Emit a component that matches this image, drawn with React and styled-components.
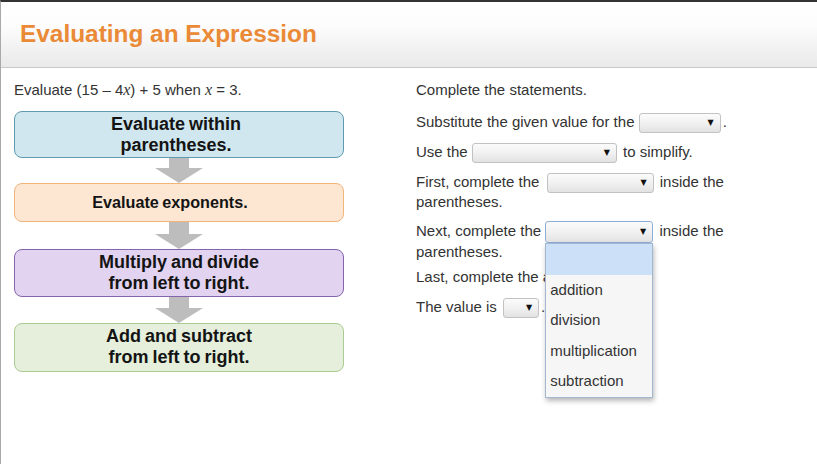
import React from "react";
import styled, { createGlobalStyle } from "styled-components";

const GlobalStyle = createGlobalStyle`
  html, body { margin: 0; padding: 0; background: #fff; }
  body { font-family: "Liberation Sans", Arial, sans-serif; }
  * { box-sizing: border-box; }
`;

const Frame = styled.div`
  width: 817px;
  height: 464px;
  border-top: 2px solid #333;
  border-left: 1px solid #a9a9a9;
  overflow: hidden;
  background: #fff;
`;

const Header = styled.header`
  height: 66px;
  display: flex;
  align-items: center;
  padding: 0 0 2px 19px;
  background: linear-gradient(to bottom, #ffffff 0%, #fdfdfd 35%, #e9e9e9 100%);
  border-bottom: 1px solid #c9c9c9;
`;

const Title = styled.h1`
  margin: 0;
  font-size: 24.4px;
  line-height: 28px;
  font-weight: bold;
  color: #ea8a36;
`;

const Body = styled.main`
  display: flex;
  padding: 13px 0 0 13px;
  font-size: 15px;
  line-height: 18px;
  color: #333;
`;

const LeftCol = styled.section`
  width: 330px;
  flex: none;
`;

const RightCol = styled.section`
  width: 322px;
  margin-left: 72px;
  flex: none;
`;

const Prompt = styled.p`
  margin: 0 0 ${(p) => p.$gap || 0}px;
`;

const Var = styled.i`
  font-family: "Liberation Serif", "Times New Roman", serif;
  font-size: 16px;
`;

const Flow = styled.div`
  display: flex;
  flex-direction: column;
`;

const Step = styled.div`
  border: 1px solid ${(p) => p.$border};
  background: ${(p) => p.$fill};
  border-radius: 8px;
  text-align: center;
  font-weight: bold;
  color: #141414;
  font-size: ${(p) => p.$size || 18}px;
  line-height: 21px;
  word-spacing: -1px;
  padding: ${(p) => p.$pad || "2px 0 2px"};
`;

const ArrowRow = styled.div`
  display: flex;
  justify-content: center;
  height: ${(p) => p.$h || 26}px;
`;

const Arrow = ({ h }) => (
  <ArrowRow $h={h}>
    <svg width="50" height={h} viewBox={`0 0 50 ${h}`}>
      <rect x="15" y="0" width="20" height={h - 15} fill="#bdbdbd" />
      <polygon points={`1,${h - 15} 49,${h - 15} 25,${h}`} fill="#bdbdbd" />
    </svg>
  </ArrowRow>
);

const Statement = styled.p`
  margin: 0 0 ${(p) => (p.$gap !== undefined ? p.$gap : 10)}px;
`;

const SelectBox = styled.span`
  display: inline-flex;
  align-items: center;
  justify-content: flex-end;
  vertical-align: middle;
  width: ${(p) => p.$w}px;
  height: ${(p) => (p.$open ? 22 : 20)}px;
  margin: 0 ${(p) => p.$mr || 2}px 0 ${(p) => p.$ml || 0}px;
  padding-right: 6px;
  border: 1px solid ${(p) => (p.$open ? "#8eaed6" : "#c2c2c2")};
  border-radius: 3px;
  background: linear-gradient(to bottom, #fbfbfb 0%, #f1f1f1 50%, #e2e2e2 100%);
  line-height: 1;
  color: #111;
`;

const Caret = styled.span`
  font-family: "DejaVu Sans", sans-serif;
  font-size: 8px;
`;

const Select = ({ w, open, ml, mr }) => (
  <SelectBox $w={w} $open={open} $ml={ml} $mr={mr}>
    <Caret>▼</Caret>
  </SelectBox>
);

const Anchor = styled.span`
  position: relative;
  display: inline-block;
  vertical-align: middle;
`;

const Menu = styled.ul`
  position: absolute;
  top: 100%;
  left: 0;
  z-index: 10;
  width: 108px;
  margin: 0;
  padding: 0;
  list-style: none;
  background: #f6f6f6;
  border: 1px solid #a4b7d0;
  box-shadow: 1px 3px 5px rgba(0, 0, 0, 0.28);
`;

const Option = styled.li`
  height: 30.5px;
  line-height: 30.5px;
  padding-left: 4px;
  font-size: 15px;
  color: #333;
  background: ${(p) => (p.$active ? "#cce0f7" : "transparent")};
`;

const options = ["", "addition", "division", "multiplication", "subtraction"];

export default function App() {
  return (
    <>
      <GlobalStyle />
      <Frame>
        <Header>
          <Title>Evaluating an Expression</Title>
        </Header>
        <Body>
          <LeftCol>
            <Prompt $gap={12}>
              Evaluate (15 – 4<Var>x</Var>) + 5 when <Var>x</Var> = 3.
            </Prompt>
            <Flow>
              <Step $fill="#d0e7ef" $border="#5f9bb0" $pad="2px 6px 1px 0">
                Evaluate within
                <br />
                parentheses.
              </Step>
              <Arrow h={25} />
              <Step $fill="#fde7d3" $border="#f1b47a" $size={16.2} $pad="8px 18px 8px 0">
                Evaluate exponents.
              </Step>
              <Arrow h={27} />
              <Step $fill="#e2d3f1" $border="#8464aa">
                Multiply and divide
                <br />
                from left to right.
              </Step>
              <Arrow h={26} />
              <Step $fill="#e5efdb" $border="#aacb91" $pad="2px 0 3px">
                Add and subtract
                <br />
                from left to right.
              </Step>
            </Flow>
          </LeftCol>
          <RightCol>
            <Prompt $gap={14}>Complete the statements.</Prompt>
            <Statement>
              Substitute the given value for the <Select w={82} />.
            </Statement>
            <Statement>
              Use the <Select w={145} /> to simplify.
            </Statement>
            <Statement>
              First, complete the <Select w={107} ml={3} /> inside the parentheses.
            </Statement>
            <Statement $gap={7}>
              Next, complete the{" "}
              <Anchor>
                <Select w={108} open />
                <Menu>
                  {options.map((o, i) => (
                    <Option key={i} $active={i === 0}>
                      {o}
                    </Option>
                  ))}
                </Menu>
              </Anchor>{" "}
              inside the parentheses.
            </Statement>
            <Statement>
              Last, complete the addition <Select w={40} />.
            </Statement>
            <Statement>
              The value is <Select w={36} ml={2} />.
            </Statement>
          </RightCol>
        </Body>
      </Frame>
    </>
  );
}
